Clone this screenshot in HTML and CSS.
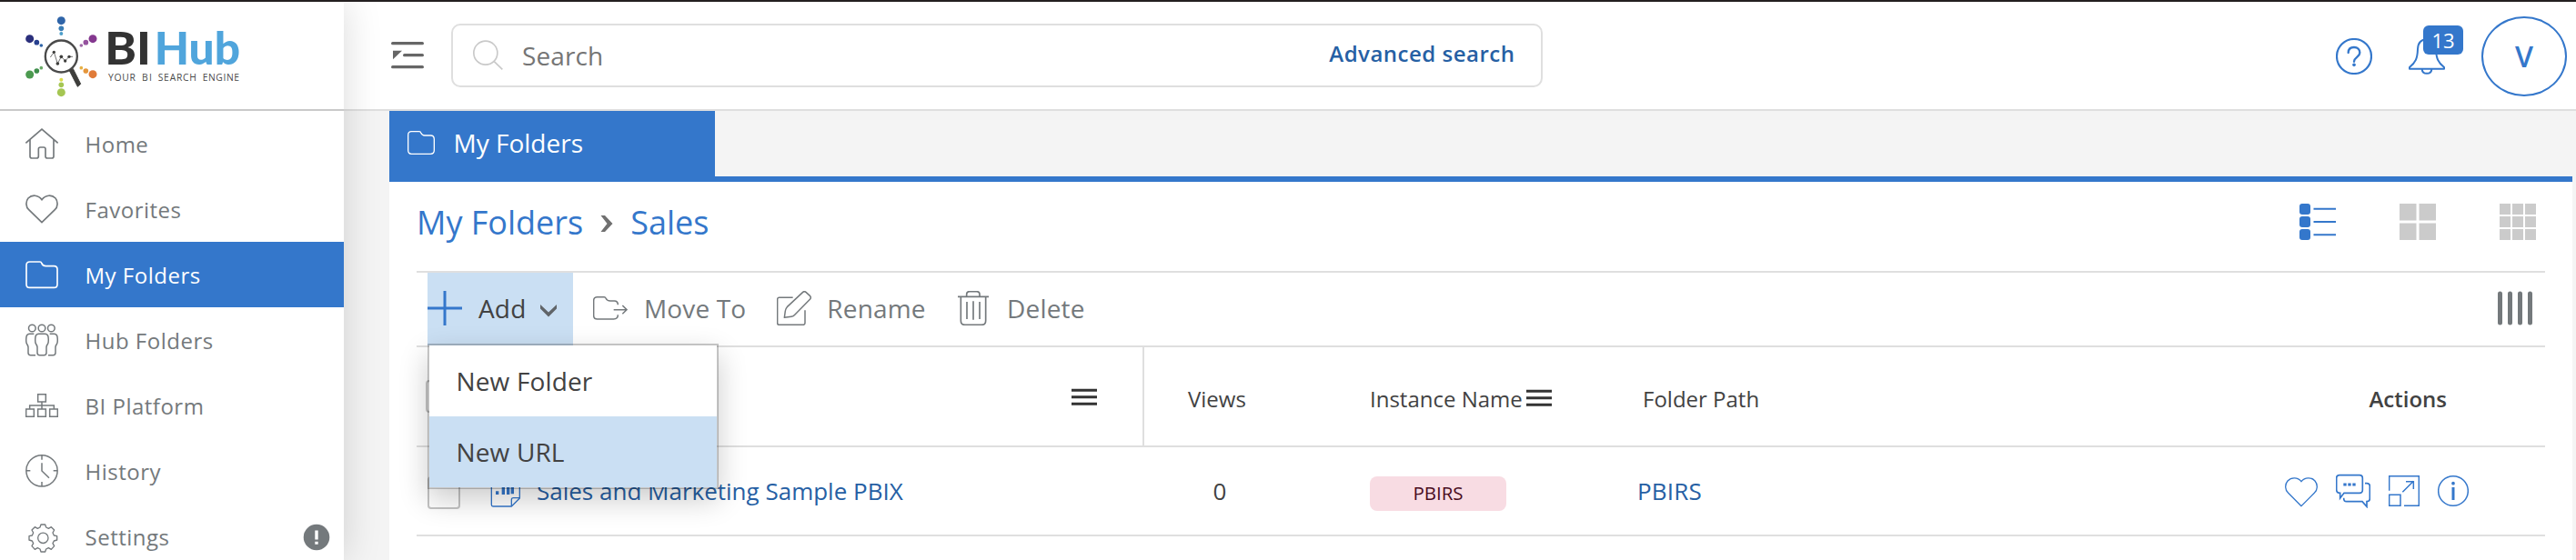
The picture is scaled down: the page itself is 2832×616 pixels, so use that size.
FILE: index.html
```html
<!DOCTYPE html>
<html lang="en">
<head>
<meta charset="utf-8">
<title>BI Hub - My Folders</title>
<link rel="stylesheet" href="styles.css">
</head>
<body>
<div class="app">
  <aside class="sidebar">
    <div class="brand">
      <svg class="logo" width="236" height="92" viewBox="83 50 708 276">
        <g>
          <circle cx="201" cy="67" r="13.5" fill="#2f64a8"/><circle cx="201" cy="93" r="8.5" fill="#3a7db5"/><circle cx="201" cy="110" r="6" fill="#4e9fca"/>
          <circle cx="97" cy="127" r="13.5" fill="#2b2f7c"/><circle cx="120" cy="139" r="8.5" fill="#27408f"/><circle cx="135" cy="149" r="5.5" fill="#2f64a8"/>
          <circle cx="305" cy="127" r="13.5" fill="#84388f"/><circle cx="282" cy="139" r="8.5" fill="#95529e"/><circle cx="267" cy="149" r="5.5" fill="#a069a8"/>
          <circle cx="97" cy="245" r="13.5" fill="#4c9a50"/><circle cx="120" cy="233" r="8.5" fill="#3f8f4c"/><circle cx="135" cy="223" r="5.5" fill="#69a965"/>
          <circle cx="305" cy="244" r="13.5" fill="#e07b39"/><circle cx="282" cy="233" r="8.5" fill="#e5963c"/><circle cx="267" cy="223" r="5.5" fill="#e6b043"/>
          <circle cx="201" cy="304" r="13.5" fill="#a5c653"/><circle cx="201" cy="279" r="8.5" fill="#a5c653"/><circle cx="201" cy="262" r="6" fill="#dcdc4a"/>
          <circle cx="201" cy="185" r="52.5" fill="#fff" stroke="#4a4a4a" stroke-width="7"/>
          <path d="M228 232l12-6 25 50-10 9z" fill="#3d3d3b" stroke="#3d3d3b" stroke-width="3" stroke-linejoin="round"/>
          <path d="M165 188l12-17 12 38 12-23 13 14 13-14h12" fill="none" stroke="#555" stroke-width="2.5"/>
          <g fill="#3d3d3b"><circle cx="177" cy="171" r="5"/><circle cx="189" cy="209" r="5.500"/><circle cx="201" cy="186" r="5.500"/><circle cx="214" cy="200" r="5"/><circle cx="227" cy="186" r="5"/></g>
        </g>
        <text class="logo-bi" x="345" y="213" textLength="152" lengthAdjust="spacingAndGlyphs">BI</text>
        <text class="logo-hub" x="508" y="213" textLength="283" lengthAdjust="spacingAndGlyphs">Hub</text>
        <text class="logo-tag" y="266"><tspan x="356" textLength="90">YOUR</tspan> <tspan x="467" textLength="33">BI</tspan> <tspan x="520" textLength="127">SEARCH</tspan> <tspan x="667" textLength="121">ENGINE</tspan></text>
      </svg>
    </div>
    <nav class="nav">
      <a class="nav-item"><svg class="ico" width="36" height="72" viewBox="84 6 108 216"><path d="M85 112L138 66 191 112M99 101v55q0 6 6 6h16q6 0 6-6v-24q0-6 6-6h11q6 0 6 6v24q0 6 6 6h15q6 0 6-6v-55"/></svg><span>Home</span></a>
      <a class="nav-item"><svg class="ico" width="36" height="72" viewBox="84 222 108 216"><path d="M138 374L95 332C85 323 84 305 93 294 105 282 126 282 138 299 150 282 171 282 183 294 192 305 191 323 181 332z"/></svg><span>Favorites</span></a>
      <a class="nav-item active"><svg class="ico" width="36" height="72" viewBox="84 438 108 216"><path d="M98 504h34q4 0 5 4c3 7 6 10 14 10h27q11 0 11 11v49q0 11-11 11H98q-11 0-11-11v-63q0-11 11-11z"/></svg><span>My Folders</span></a>
      <a class="nav-item"><svg class="ico" width="36" height="72" viewBox="84 -66 108 216"><g stroke-width="4.500"><circle cx="106" cy="3" r="11.500"/><circle cx="138" cy="3" r="11.500"/><circle cx="169" cy="3" r="11.500"/><path d="M128 22h20q9 0 11 9c1 8 2 17-1 23-3 4-5 7-5 12v18q0 8-8 8h-14q-8 0-8-8V66c0-5-2-8-5-12-3-6-2-15-1-23q2-9 11-9zM112 22h-14q-9 0-11 9c-1 8-2 17 1 23 3 4 5 7 5 12v18q0 8 8 8h16M164 22h14q9 0 11 9c1 8 2 17-1 23-3 4-5 7-5 12v18q0 8-8 8h-16"/></g></svg><span>Hub Folders</span></a>
      <a class="nav-item"><svg class="ico" width="36" height="72" viewBox="84 150 108 216"><g stroke-width="4.500"><path d="M125 221h26v25h-26zM86 270h26v25H86zM125 270h26v25h-26zM164 270h26v25h-26zM138 246v24M98 270v-12h80v12"/></g></svg><span>BI Platform</span></a>
      <a class="nav-item"><svg class="ico" width="36" height="72" viewBox="84 366 108 216"><g stroke-width="4.500"><circle cx="138" cy="473.500" r="51.500"/><path d="M138 422v15M138 510v15M87 473.500h13M176 473.500h13M138 448v26l24 23"/></g></svg><span>History</span></a>
      <a class="nav-item"><svg class="ico" width="36" height="72" viewBox="84 582 108 216"><g stroke-width="4"><circle cx="142" cy="695.500" r="17"/><path d="M135 651h14l3 9 8 4 9-5 10 10-5 9 4 9 10 2v13l-10 3-4 8 5 9-10 11-9-5-8 4-3 9h-14l-3-9-8-4-9 5-10-11 5-9-4-8-10-3v-13l10-2 4-9-5-9 10-10 9 5 8-4z" stroke-linejoin="round"/></g></svg><span>Settings</span><svg class="alert" width="30" height="30" viewBox="0 0 30 30"><circle cx="15" cy="15" r="14.300" fill="#74797c"/><path d="M15 7.500v10M15 19.800v3" stroke="#fff" stroke-width="3.400"/></svg></a>
    </nav>
  </aside>
  <div class="page">
    <header class="header">
      <svg class="toggle" width="36" height="32" viewBox="90 136 108 96"><path d="M95 144h98M134 183h59M95 222h98" stroke="#666" stroke-width="10" stroke-linecap="round"/><path d="M96 168h30l-30 29z" fill="#666"/></svg>
      <div class="search">
        <svg class="lens" width="34" height="34" viewBox="359 136 102 102" fill="none" stroke="#c9c9c9" stroke-width="5"><circle cx="400.500" cy="178.500" r="39"/><path d="M428 206l28 27"/></svg>
        <span class="placeholder">Search</span>
        <a class="advanced">Advanced search</a>
      </div>
      <div class="user-tools">
        <svg class="help" width="40" height="40" viewBox="408 126 120 120" fill="none" stroke="#3477cb"><circle cx="468" cy="186" r="57" stroke-width="6.500"/><path d="M449 174c0-13 8-18 19-18s19 7 19 18c0 14-19 15-19 29" stroke-width="7" stroke-linecap="round"/><circle cx="468" cy="214" r="5.500" fill="#3477cb" stroke="none"/></svg>
        <div class="bell">
          <svg width="40" height="40" viewBox="648 126 120 120" fill="none" stroke="#3477cb" stroke-width="6"><path d="M708 130c-19 0-29 13-30 32-1 31-7 44-27 60v5h114v-5c-20-16-26-29-27-60-1-19-11-32-30-32zM692 229c2 18 30 18 32 0" stroke-linejoin="round"/></svg>
          <span class="badge">13</span>
        </div>
        <div class="avatar">V</div>
      </div>
    </header>
    <main class="content">
      <div class="tabs">
        <div class="tab"><svg width="30" height="26" viewBox="144 432 90 78" fill="none" stroke="#fff" stroke-width="4"><path d="M157 434h26q4 0 5 4c3 6 6 9 12 9h20q12 0 12 12v37q0 12-12 12h-63q-11 0-11-12v-50q0-12 11-12z"/></svg><span>My Folders</span></div>
      </div>
      <div class="panel">
        <div class="titlebar">
          <div class="crumbs"><a>My Folders</a><svg width="14" height="20" viewBox="0 0 14 20"><path d="M.5 1h4.500l8.500 9-8.500 9H.5L7.500 10z" fill="#707070"/></svg><a>Sales</a></div>
          <div class="views">
            <svg width="40" height="40" viewBox="0 0 40 40" fill="#3477cb"><rect width="12" height="12" rx="3"/><rect y="14" width="12" height="12" rx="3"/><rect y="28" width="12" height="12" rx="3"/><path d="M15.500 4.800H40v2H15.500zM15.500 19H40v2H15.500zM15.500 33.200H40v2H15.500z"/></svg>
            <svg width="40" height="40" viewBox="0 0 40 40" fill="#cbcbcb"><path d="M0 0h18.500v18.500H0zM21.500 0H40v18.500H21.500zM0 21.500h18.500V40H0zM21.500 21.500H40V40H21.500z"/></svg>
            <svg width="40" height="40" viewBox="0 0 40 40" fill="#cbcbcb"><path d="M0 0h12v12H0zM14 0h12v12H14zM28 0h12v12H28zM0 14h12v12H0zM14 14h12v12H14zM28 14h12v12H28zM0 28h12v12H0zM14 28h12v12H14zM28 28h12v12H28z"/></svg>
          </div>
        </div>
        <div class="toolbar">
          <div class="tool add">
            <svg width="38" height="38" viewBox="0 0 38 38" fill="#3477cb"><path d="M17.500 0h3v38h-3zM0 17.500h38v3H0z"/></svg>
            <span>Add</span>
            <svg class="caret" width="18" height="14" viewBox="0 0 18 14"><path d="M0 0v4.500l9 9 9-9V0L9 8.500z" fill="#606468"/></svg>
            <div class="menu"><a class="menu-item">New Folder</a><a class="menu-item hover">New URL</a></div>
          </div>
          <div class="tool move"><svg width="38" height="38" viewBox="636 120 114 114" class="ico"><g stroke-width="4.500"><path d="M718 166c0-9-4-13-12-13h-13c-8 0-13-4-15-9q-2-4-5-4h-23q-12 0-12 12v49q0 12 12 12h54c9 0 14-4 14-14M704 182h43M733 168l14 14-14 14"/></g></svg><span>Move To</span></div>
          <div class="tool rename"><svg width="38" height="38" viewBox="162 120 114 114" class="ico"><g stroke-width="4.500"><path d="M215 142h-45q-6 0-6 6v78q0 6 6 6h79q6 0 6-6v-42M248 124q5-4 10 0l14 13q4 5 0 10l-50 51q-5 6-12 7l-23 3 3-22q1-8 6-13z" stroke-linejoin="round"/></g></svg><span>Rename</span></div>
          <div class="tool delete"><svg width="34" height="38" viewBox="756 120 102 114" class="ico"><g stroke-width="5"><path d="M756 139h102M785 137v-5q0-10 10-10h23q10 0 10 10v5M766 139v79q0 14 14 14h54q14 0 14-14v-79M786 156v57M807 154v61M828 156v57"/></g></svg><span>Delete</span></div>
          <svg class="columns" width="38" height="38" viewBox="0 0 38 38" stroke="#74797c" stroke-width="5" stroke-linecap="round"><path d="M2.500 3v32M13.500 3v32M24.500 3v32M35.500 3v32"/></svg>
        </div>
        <div class="row head">
          <div class="cell name"><span class="check"></span><svg class="burger" width="28" height="20" viewBox="0 0 28 20"><path d="M0 2.200h28M0 9.700h28M0 17.200h28" stroke="#333" stroke-width="3"/></svg></div>
          <div class="cell count">Views</div>
          <div class="cell inst"><span>Instance Name</span><svg class="burger" width="28" height="20" viewBox="0 0 28 20"><path d="M0 2.200h28M0 9.700h28M0 17.200h28" stroke="#333" stroke-width="3"/></svg></div>
          <div class="cell path">Folder Path</div>
          <div class="cell actions-title">Actions</div>
        </div>
        <div class="row item">
          <div class="cell name"><span class="check"></span>
            <svg class="doc" width="34" height="36" viewBox="298 728 102 108" fill="none" stroke="#3477cb" stroke-width="4"><path d="M302 740v85q0 5 5 5h61l27-27v-63M368 830v-22q0-6 6-6h21" stroke-linejoin="round"/><path d="M321 780v11M341 762v29M357 752v39M371 765v24" stroke-width="10"/></svg>
            <a>Sales and Marketing Sample PBIX</a></div>
          <div class="cell count">0</div>
          <div class="cell inst"><span class="pill">PBIRS</span></div>
          <div class="cell path"><a>PBIRS</a></div>
          <div class="cell actions">
            <svg width="36" height="38" viewBox="237 693 108 114"><path d="M291 800L248 757C237 747 236 729 246 717 258 704 279 704 291 719 303 704 324 704 336 717 346 729 345 747 334 757z"/></svg>
            <svg width="38" height="38" viewBox="408 693 114 114"><path d="M420 698h66q10 0 10 10v39q0 10-10 10h-51l-13 17v-17q-12 0-12-12v-37q0-10 10-10zM504 725h6q10 0 10 10v40q0 10-10 10v17l-15-17h-52q-9 0-9-12" stroke-width="5"/><path d="M433 729h10M448 729h10M463 729h10" stroke-width="9"/></svg>
            <svg width="34" height="38" viewBox="582 693 102 114"><path d="M584 749v-48h98v98h-49M584 763h37v36h-37zM628 754l36-36M639 719h25v25" stroke-width="4.500"/></svg>
            <svg width="34" height="38" viewBox="744 693 102 114"><circle cx="795" cy="750" r="49" stroke-width="4.500"/><path d="M795 738v42" stroke-width="9"/><circle cx="795" cy="725" r="5.500" fill="#3477cb" stroke="none"/></svg>
          </div>
        </div>
      </div>
    </main>
  </div>
</div>
</body>
</html>
```
FILE: styles.css
```css
* { box-sizing: border-box; }
body { margin: 0; font-family: "Open Sans", sans-serif; background: #f4f4f4; }
svg { display: block; flex: none; }
.app { display: flex; width: 2832px; height: 616px; border-top: 2px solid #231f20; overflow: hidden; }
.ico { fill: none; stroke: #74797c; stroke-width: 5; }

.sidebar { position: relative; z-index: 2; flex: none; width: 378px; background: #fff; box-shadow: 0 0 40px rgba(0,0,0,.15); }
.brand { height: 120px; padding: 14.700px 0 0 27.700px; border-bottom: 2px solid #c9c9c9; }
.logo-bi { font: 900 146px Lato, sans-serif; fill: #333; }
.logo-hub { font: 900 146px Lato, sans-serif; fill: #50a5dc; }
.logo-tag { font: 31px "Open Sans", sans-serif; fill: #4a4a4a; }
.nav-item { display: flex; align-items: center; height: 72px; padding: 0 15px 0 28px; color: #74797c; font-size: 24px; letter-spacing: .5px; }
.nav-item span { margin: 1px auto 0 29.500px; }
.nav-item.active { background: #3477cb; color: #fff; }
.nav-item.active .ico { stroke: #fff; }
.alert { margin-top: 2px; }

.page { flex: 1; min-width: 0; display: flex; flex-direction: column; }
.header { display: flex; flex: none; height: 120px; padding-left: 52px; background: #fff; border-bottom: 2px solid #dfdfdf; }
.toggle { margin-top: 43px; }
.search { display: flex; align-items: center; width: 1200px; height: 70px; margin: 24px 0 0 30px; padding: 0 28.500px 0 21.500px; border: 2px solid #dfdfdf; border-radius: 10px; }
.placeholder { margin-left: 20.500px; font-size: 28px; letter-spacing: .1px; color: #757575; }
.advanced { margin: -5px 0 0 auto; font-size: 24px; font-weight: 600; letter-spacing: .5px; color: #2660a4; }
.user-tools { display: flex; margin-left: auto; padding-right: 10px; color: #3477cb; }
.help { margin-top: 40px; }
.bell { position: relative; margin: 40px 0 0 40px; }
.badge { position: absolute; left: 16px; top: -14px; width: 44px; height: 32px; border-radius: 6px; background: #3477cb; color: #fff; font-size: 22px; line-height: 32px; text-align: center; }
.avatar { width: 94px; height: 88px; margin: 16px 0 0 40px; border: 2px solid #3477cb; border-radius: 50%; font-size: 32px; font-weight: 600; line-height: 84px; text-align: center; }

.content { padding: 0 4px 0 50px; flex: 1; display: flex; flex-direction: column; }
.tabs { height: 78px; border-bottom: 6px solid #3477cb; }
.tab { display: flex; align-items: center; width: 358px; height: 72px; padding-left: 20px; background: #3477cb; color: #fff; font-size: 28px; }
.tab span { margin: -2px 0 0 20.500px; }
.tab svg { margin-top: -2px; }
.panel { flex: 1; padding: 0 30px; background: #fff; }
.titlebar { display: flex; justify-content: space-between; height: 98px; padding-right: 10px; }
.crumbs { display: flex; align-items: center; height: 89px; font-size: 36px; color: #3477cb; }
.crumbs svg { margin: 2px 19px 0 19px; }
.views { display: flex; gap: 70px; padding-top: 24px; }

.toolbar { display: flex; align-items: center; height: 84px; padding: 0 14px 0 12px; border-top: 2px solid #dfdfdf; border-bottom: 2px solid #dfdfdf; color: #74797c; font-size: 28px; letter-spacing: .15px; }
.tool { display: flex; align-items: center; height: 80px; }
.tool > svg { margin-top: -2px; }
.tool > span { margin-top: -2px; }
.add { position: relative; width: 160px; background: #cadff3; color: #424242; }
.add > span { margin-left: 18px; }
.add .caret { margin: 4px 0 0 16px; }
.move { margin-left: 22px; }
.move > span { margin-left: 18px; }
.rename { margin-left: 34px; }
.rename > span { margin-left: 17px; }
.delete { margin-left: 35.500px; }
.delete > span { margin-left: 20px; }
.columns { margin-left: auto; margin-top: -2px; }
.menu { position: absolute; z-index: 3; left: 0; top: 78px; width: 320px; border: 2px solid rgba(0,0,0,.22); background: #fff; background-clip: padding-box; box-shadow: 0 12px 30px rgba(0,0,0,.2); }
.menu-item { display: flex; align-items: center; height: 78px; padding: 0 0 0 29.500px; color: #424242; font-size: 28px; }
.menu-item.hover { background: #cadff3; }

.row { display: flex; border-bottom: 2px solid #dfdfdf; }
.cell { display: flex; align-items: center; flex: none; }
.check { flex: none; width: 36px; height: 36px; border: 2px solid #c4c4c4; border-radius: 4px; }
.name { width: 800px; }
.inst { width: 300px; }
.head { height: 110px; color: #424242; font-size: 24px; }
.head .name { justify-content: space-between; padding: 0 50px 0 10px; border-right: 2px solid #dfdfdf; }
.head .name .burger { margin-top: 1px; }
.head .count { width: 248px; padding: 5px 0 0 48px; }
.head .inst { padding-top: 5px; }
.head .inst .burger { margin: -1px 0 0 4px; }
.head .path { padding-top: 5px; }
.actions-title { margin-left: auto; padding: 5px 108px 0 0; font-weight: 600; }
.item { height: 98px; font-size: 26px; color: #424242; }
.item a { color: #2660a4; }
.item .name { padding-left: 12px; }
.item .check { margin-top: 4px; }
.doc { margin: 2px 0 0 33px; }
.item .name a { margin-left: 17px; }
.item .count { width: 248px; padding-left: 75.500px; }
.pill { width: 150px; height: 38px; margin-top: 6px; border-radius: 8px; background: #f8dce3; color: #4a0c1e; font-size: 20.500px; line-height: 37px; text-align: center; }
.item .path { margin-left: -6px; letter-spacing: .2px; }
.actions { margin-left: auto; margin-right: 84px; }
.actions svg { margin-left: 20px; fill: none; stroke: #3477cb; stroke-width: 4; }
```
